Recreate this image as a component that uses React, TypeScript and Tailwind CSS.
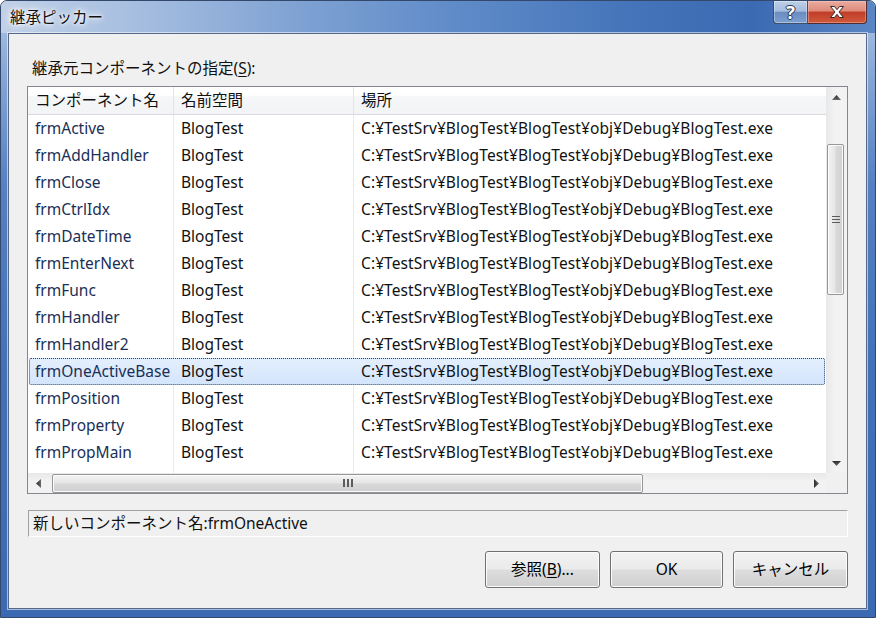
import React from 'react';

const FONT = "font-['Noto_Sans','Noto_Sans_CJK_JP',sans-serif]";
const PATH = 'C:¥TestSrv¥BlogTest¥BlogTest¥obj¥Debug¥BlogTest.exe';
const ROWS = [
  'frmActive', 'frmAddHandler', 'frmClose', 'frmCtrlIdx', 'frmDateTime', 'frmEnterNext', 'frmFunc',
  'frmHandler', 'frmHandler2', 'frmOneActiveBase', 'frmPosition', 'frmProperty', 'frmPropMain',
];
const SELECTED = 'frmOneActiveBase';

const BTN = 'h-[37px] rounded-[3px] border border-[#707070] shadow-[inset_0_0_0_1px_#fcfcfc] bg-[linear-gradient(to_bottom,#f2f2f2_0%,#ebebeb_48%,#dddddd_52%,#cfcfcf_100%)] flex items-center justify-center text-[15.5px] text-black';
const SEP = 'border-r border-[#e3ebf5]';

function Arrow({ dir }: { dir: 'up' | 'down' | 'left' | 'right' }) {
  const v = dir === 'up' || dir === 'down';
  const pts = { up: '0,5 4.5,0 9,5', down: '0,0 9,0 4.5,5', left: '5,0 5,9 0,4.5', right: '0,0 0,9 5,4.5' }[dir];
  return (
    <svg width={v ? 9 : 5} height={v ? 5 : 9} viewBox={v ? '0 0 9 5' : '0 0 5 9'}>
      <defs>
        <linearGradient id={`g-${dir}`} x1="0" y1="0" x2={v ? '0' : '1'} y2={v ? '1' : '0'}>
          <stop offset="0" stopColor="#2b2b2b" />
          <stop offset="1" stopColor="#6a6a6a" />
        </linearGradient>
      </defs>
      <polygon points={pts} fill={`url(#g-${dir})`} />
    </svg>
  );
}

function Row({ name }: { name: string }) {
  if (name === SELECTED) {
    return (
      <div className="h-[27px] px-[1px] shrink-0">
        <div className="h-full flex items-center rounded-[2px] border border-dotted border-[#2a4470] bg-[linear-gradient(to_bottom,#e4effd_0%,#d3e5fc_100%)]">
          <div className="w-[144px] pl-[5px] text-[#1a2f57]">{name}</div>
          <div className="w-[180px] pl-[7px]">BlogTest</div>
          <div className="flex-1 pl-[7px] whitespace-nowrap tracking-[0.1px]">{PATH}</div>
        </div>
      </div>
    );
  }
  return (
    <div className="h-[27px] flex shrink-0">
      <div className={`w-[146px] pl-[7px] flex items-center text-[#1a2f57] ${SEP}`}>{name}</div>
      <div className={`w-[180px] pl-[7px] flex items-center ${SEP}`}>BlogTest</div>
      <div className="flex-1 pl-[7px] flex items-center whitespace-nowrap tracking-[0.1px]">{PATH}</div>
    </div>
  );
}

export default function App() {
  return (
    <div className={`${FONT} w-[876px] h-[618px] flex flex-col rounded-t-[7px] overflow-hidden border border-[#33486a] bg-[linear-gradient(to_bottom,#b3c7e3_0%,#86a6d4_12%,#5580c1_30%,#4371b8_60%,#3c6ab2_100%)]`}>
      {/* title bar */}
      <div className="h-[32px] shrink-0 flex items-start bg-[linear-gradient(to_right,#c0d0e7_0%,#a9c0e1_14%,#7fa2d3_34%,#5f8bc8_52%,#4574ba_72%,#3b6ab2_86%,#5b86c5_100%)]">
        <div className="flex-1 pl-[9px] pt-[5px] text-[15.5px] text-[#111] [text-shadow:0_0_6px_#fff,0_0_10px_#fff,0_0_3px_#fff]">継承ピッカー</div>
        <div className="flex mr-[8px]">
          <div className="w-[35px] h-[23px] rounded-bl-[4px] border border-t-0 border-[#3e4f6a] shadow-[inset_0_0_0_1px_rgba(255,255,255,0.35)] bg-[linear-gradient(to_bottom,#bfd0e8_0%,#a3bbdd_46%,#6b8cc0_52%,#7d9fd0_100%)] flex items-center justify-center text-white font-bold text-[18px] leading-none [text-shadow:0_0_1px_#1f2f45,1px_0_0_#2f3f58,-1px_0_0_#2f3f58,0_1px_0_#2f3f58,0_-1px_0_#2f3f58]">?</div>
          <div className="w-[59px] h-[23px] rounded-br-[4px] border border-l-0 border-t-0 border-[#4e2b2e] shadow-[inset_0_0_0_1px_rgba(255,220,210,0.35)] bg-[linear-gradient(to_bottom,#e9ab9f_0%,#dd8c7c_44%,#c23d27_52%,#d0593d_100%)] flex items-center justify-center">
            <svg width="16" height="14" viewBox="0 0 16 14">
              <path d="M1.5 1.5h4l2.5 3.2 2.5-3.2h4l-4.5 5.5 4.5 5.5h-4l-2.5-3.2-2.5 3.2h-4l4.5-5.5z" fill="#fff" stroke="#3b2626" strokeWidth="1" strokeLinejoin="round" />
            </svg>
          </div>
        </div>
      </div>

      {/* frame + client */}
      <div className="flex-1 flex pl-[7px] pr-[8px] pb-[8px]">
        <div className="flex-1 flex flex-col bg-[#f0f0f0] border border-[#56688a] shadow-[0_0_0_1px_rgba(255,255,255,0.55)] px-[18px] pt-[24px] text-[15.5px] text-[#111]">
          <div className="h-[20px] pl-[5px] leading-[20px]">
            継承元コンポーネントの指定(<span className="underline underline-offset-2">S</span>):
          </div>

          {/* list view */}
          <div className="mt-[8px] h-[408px] flex flex-col border border-[#828790] bg-white">
            <div className="flex-1 flex min-h-0">
              <div className="flex-1 flex flex-col min-w-0 overflow-hidden">
                <div className="h-[28px] shrink-0 flex border-b border-[#d9dbdf] bg-[linear-gradient(to_bottom,#ffffff_0%,#ffffff_30%,#f5f6f7_36%,#f3f4f6_100%)]">
                  <div className="w-[146px] pl-[7px] flex items-center border-r border-[#e3e4e7]">コンポーネント名</div>
                  <div className="w-[180px] pl-[7px] flex items-center border-r border-[#e3e4e7]">名前空間</div>
                  <div className="flex-1 pl-[7px] flex items-center">場所</div>
                </div>
                <div className="flex-1 flex flex-col min-h-0 overflow-hidden">
                  {ROWS.map(r => <Row key={r} name={r} />)}
                  <div className="flex-1 flex">
                    <div className={`w-[146px] ${SEP}`} />
                    <div className={`w-[180px] ${SEP}`} />
                  </div>
                </div>
              </div>

              {/* vertical scrollbar */}
              <div className="w-[21px] shrink-0 flex flex-col bg-[linear-gradient(to_right,#e8e8e8_0%,#f2f2f2_40%,#f2f2f2_100%)]">
                <div className="h-[20px] flex items-center justify-center"><Arrow dir="up" /></div>
                <div className="h-[37px]" />
                <div className="h-[151px] w-[17px] ml-[1px] rounded-[2px] border border-[#979797] shadow-[inset_0_0_0_1px_#fafafa] bg-[linear-gradient(to_right,#f4f4f4_0%,#e6e6e6_45%,#d8d8d8_55%,#d2d2d2_100%)] flex flex-col items-center justify-center gap-[2px]">
                  <div className="w-[8px] h-[1px] bg-[#5c5c5c]" />
                  <div className="w-[8px] h-[1px] bg-[#5c5c5c]" />
                  <div className="w-[8px] h-[1px] bg-[#5c5c5c]" />
                </div>
                <div className="flex-1" />
                <div className="h-[20px] flex items-center justify-center"><Arrow dir="down" /></div>
              </div>
            </div>

            {/* horizontal scrollbar */}
            <div className="h-[20px] shrink-0 flex">
              <div className="flex-1 flex items-center bg-[linear-gradient(to_bottom,#e8e8e8_0%,#f2f2f2_40%,#f2f2f2_100%)]">
                <div className="w-[20px] h-full flex items-center justify-center"><Arrow dir="left" /></div>
                <div className="w-[4px]" />
                <div className="w-[591px] h-[19px] rounded-[2px] border border-[#979797] shadow-[inset_0_0_0_1px_#fafafa] bg-[linear-gradient(to_bottom,#f4f4f4_0%,#e6e6e6_45%,#d8d8d8_55%,#d0d0d0_100%)] flex items-center justify-center gap-[2px]">
                  <div className="w-[2px] h-[8px] bg-[#5c5c5c]" />
                  <div className="w-[2px] h-[8px] bg-[#5c5c5c]" />
                  <div className="w-[2px] h-[8px] bg-[#5c5c5c]" />
                </div>
                <div className="flex-1" />
                <div className="w-[20px] h-full flex items-center justify-center"><Arrow dir="right" /></div>
              </div>
              <div className="w-[21px] bg-[#f0f0f0]" />
            </div>
          </div>

          {/* new component name */}
          <div className="mt-[16px] ml-[1px] h-[27px] flex items-center pl-[4px] border border-t-[#a0a0a0] border-l-[#a0a0a0] border-b-white border-r-white">
            新しいコンポーネント名:frmOneActive
          </div>

          {/* buttons */}
          <div className="mt-[14px] flex justify-end gap-[10px]">
            <div className={`${BTN} w-[115px]`}>参照(<span className="underline underline-offset-2">B</span>)...</div>
            <div className={`${BTN} w-[113px] border-[#3c7fb1] shadow-[inset_0_0_0_1px_#a6dcf5]`}>OK</div>
            <div className={`${BTN} w-[115px]`}>キャンセル</div>
          </div>
        </div>
      </div>
    </div>
  );
}
